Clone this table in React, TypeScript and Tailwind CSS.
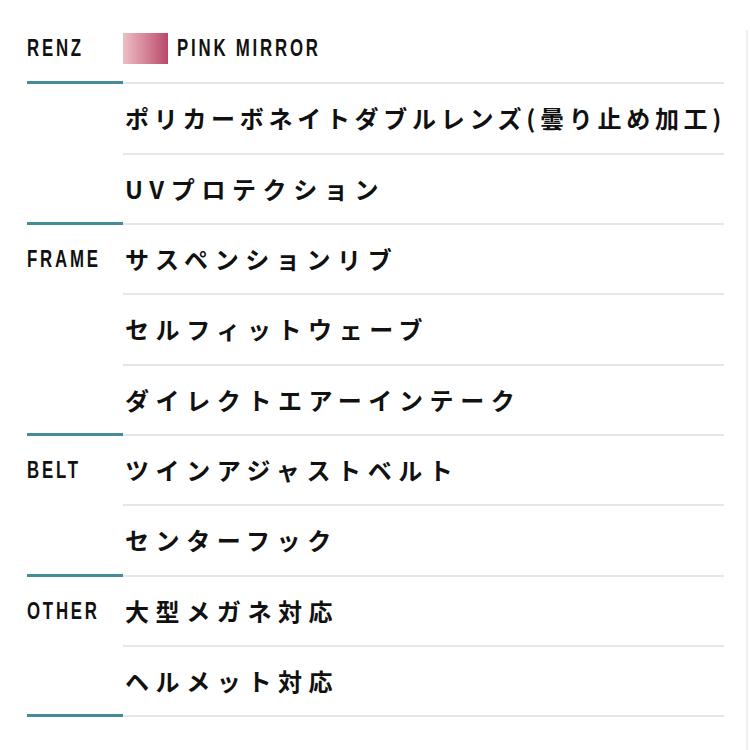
import React from 'react';

type Section = {
  label: string;
  items: string[];
};

const sections: Section[] = [
  { label: '', items: ['ポリカーボネイトダブルレンズ(曇り止め加工)', 'UVプロテクション'] },
  { label: 'FRAME', items: ['サスペンションリブ', 'セルフィットウェーブ', 'ダイレクトエアーインテーク'] },
  { label: 'BELT', items: ['ツインアジャストベルト', 'センターフック'] },
  { label: 'OTHER', items: ['大型メガネ対応', 'ヘルメット対応'] },
];

const jpFont = "font-['Noto_Sans_CJK_JP',sans-serif]";

// narrow caps label (condensed look via horizontal scale)
const Caps: React.FC<{ children: React.ReactNode }> = ({ children }) => (
  <span className="inline-block origin-left scale-x-[0.7] whitespace-nowrap text-[24px] leading-none font-bold tracking-[4px] text-[#111] font-['Liberation_Sans',sans-serif]">
    {children}
  </span>
);

const SpecSection: React.FC<{ section: Section }> = ({ section }) => {
  return (
    <div className="flex">
      {/* Label column */}
      <div className="w-[96px] shrink-0 border-b-[3px] border-[#458b98]">
        <div className="h-[68.33px] flex items-center">{section.label && <Caps>{section.label}</Caps>}</div>
      </div>
      {/* Items */}
      <div className="w-[601px] flex flex-col">
        {section.items.map((item, i) => (
          <div
            key={item}
            className={`h-[70.33px] flex items-center pl-[2px] border-b-2 border-[#e6e6e6] text-[24px] font-bold text-[#111] whitespace-nowrap ${jpFont} ${
              i === 0 && section.label === '' ? 'tracking-[4.7px]' : 'tracking-[6.6px]'
            }`}
          >
            {item}
          </div>
        ))}
      </div>
    </div>
  );
};

export default function App() {
  return (
    <div className="w-[750px] h-[750px] bg-white flex overflow-hidden">
      <div className="w-[746px] pl-[27px] pt-[14px]">
        {/* Lens colour */}
        <div className="flex">
          <div className="w-[96px] h-[70.33px] flex items-center border-b-[3px] border-[#458b98]">
            <Caps>RENZ</Caps>
          </div>
          <div className="w-[601px] h-[70.33px] flex items-center gap-[9px] border-b-2 border-[#e6e6e6]">
            <div className="w-[45px] h-[31px] bg-gradient-to-r from-[#ecbfc4] to-[#b9476b]" />
            <Caps>PINK MIRROR</Caps>
          </div>
        </div>
        {sections.map((s, i) => (
          <SpecSection key={i} section={s} />
        ))}
      </div>
      {/* page edge */}
      <div className="mt-[30px] w-[2px] bg-[#efefef]" />
    </div>
  );
}
